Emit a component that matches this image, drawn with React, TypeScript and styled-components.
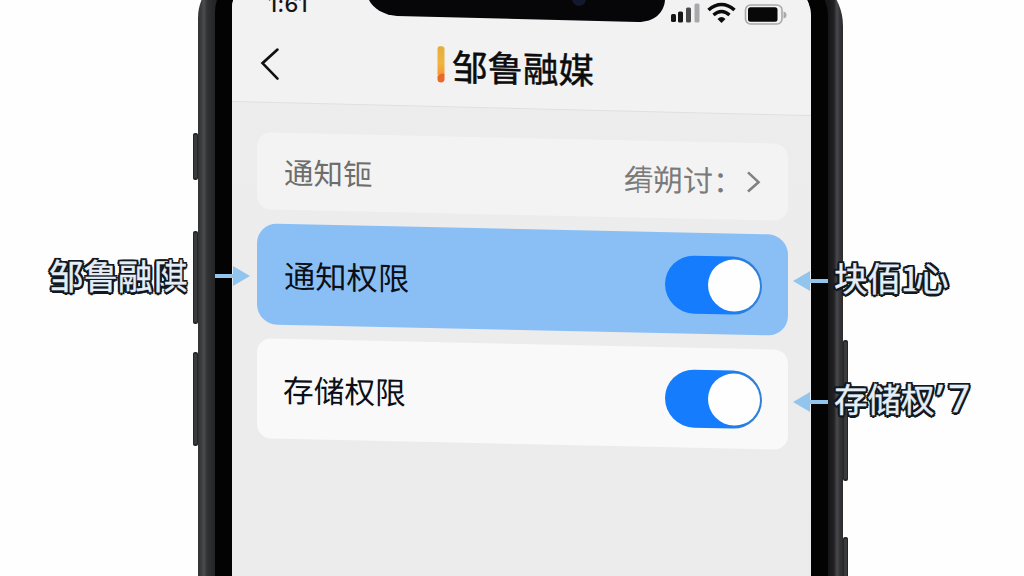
import type { ReactNode } from 'react'
import styled, { createGlobalStyle, css } from 'styled-components'

type Side = 'left' | 'right'
type Tone = 'active' | 'muted' | 'plain'

export default function App() {
  return (
    <Stage>
      <GlobalStyle />
      <Phone>
        <LeftRail>
          <SideKey $height={47} />
          <SideKey $height={93} />
          <SideKey $height={94} />
        </LeftRail>
        <Frame>
          <Bezel>
            <Screen>
              <Notch />
              <StatusBar>
                <Time>1:61</Time>
                <StatusIcons />
              </StatusBar>
              <Header>
                <BackIcon />
                <Title>
                  <BrandMark />
                  邹鲁融媒
                </Title>
              </Header>
              <List>
                <Row $height={77} $tone="muted">
                  <RowLabel $tone="muted">通知钷</RowLabel>
                  <RowValue>
                    <FusedGlyph left="纟" right="青" />
                    <span>朔讨：</span>
                    <ChevronIcon />
                  </RowValue>
                </Row>
                <Row $height={101} $tone="active">
                  <RowLabel $tone="active">通知权限</RowLabel>
                  <Toggle />
                </Row>
                <Row $height={100} $tone="plain">
                  <RowLabel $tone="plain">存储权限</RowLabel>
                  <Toggle />
                </Row>
              </List>
            </Screen>
          </Bezel>
        </Frame>
        <RightRail>
          <SideKey $height={141} />
          <SideKey $height={60} />
        </RightRail>
      </Phone>
      <Callout side="left" x={49} y={276}>
        邹鲁融
        <FusedGlyph left="阝" right="其" />
      </Callout>
      <Callout side="right" x={793} y={281}>
        块佰<Narrow>1</Narrow>心
      </Callout>
      <Callout side="right" x={793} y={402}>
        存储权<Digits>’7</Digits>
      </Callout>
    </Stage>
  )
}

interface CalloutProps {
  children: ReactNode
  side: Side
  x: number
  y: number
}
function Callout({ children, side, x, y }: CalloutProps) {
  return (
    <CalloutBox $side={side} $x={x} $y={y}>
      <CalloutText $side={side}>{children}</CalloutText>
      <Arrow $side={side} />
    </CalloutBox>
  )
}

function FusedGlyph({ left, right }: { left: string; right: string }) {
  return (
    <Fused>
      <span>{left}</span>
      <FusedRight>{right}</FusedRight>
    </Fused>
  )
}

function Notch() {
  return (
    <NotchSvg height="26" viewBox="0 0 304 26" width="304">
      <path d="M0 0H296C295 13 285 22 269 22L28 16C14 15 4 8 0 0Z" fill="#060608" />
      <circle cx="210" cy="-1" fill="#12182e" r="7" />
    </NotchSvg>
  )
}

function StatusIcons() {
  return (
    <svg fill="none" height="26" viewBox="0 0 118 26" width="118">
      <rect fill="#151515" height="8" rx="1.5" width="5" x="1" y="14" />
      <rect fill="#151515" height="11" rx="1.5" width="5" x="8" y="11.5" />
      <rect fill="#4b4b4d" height="15" rx="1.5" width="5" x="16" y="7.5" />
      <rect fill="#a9a9ab" height="19" rx="1.5" width="5" x="24.5" y="3.5" />
      <path d="M38.5 10Q51.5 -1 64.5 10" stroke="#0b0b0b" strokeWidth="3.6" />
      <path d="M43.5 15Q51.5 8 59.5 15" stroke="#0b0b0b" strokeWidth="3.4" />
      <path d="M47.5 19Q51.5 15 55.5 19L51.5 23Z" fill="#0b0b0b" />
      <rect height="19" rx="5" stroke="#a9a9ac" strokeWidth="1.6" width="36.5" x="75.5" y="5" />
      <rect fill="#080808" height="14.5" rx="2.5" width="29.5" x="78" y="7.3" />
      <path d="M113.5 11.5Q116.5 12 116.5 15T113.5 18.5Z" fill="#a9a9ac" />
    </svg>
  )
}

function BackIcon() {
  return (
    <BackSvg fill="none" height="34" viewBox="0 0 20 34" width="20">
      <path d="M17.5 2.5L2.5 16.5L17.5 31.5" stroke="#111" strokeLinecap="round" strokeWidth="2.6" />
    </BackSvg>
  )
}

function BrandMark() {
  return (
    <svg height="38" viewBox="0 0 8 38" width="8">
      <defs>
        <linearGradient id="mark" x1="0" x2="0" y1="0" y2="1">
          <stop offset="0" stopColor="#e3ae3c" />
          <stop offset="0.6" stopColor="#f2b43c" />
          <stop offset="1" stopColor="#f29a35" />
        </linearGradient>
      </defs>
      <path d="M.5 3Q.5 0 4 0T7.5 3V28.5L.5 29Z" fill="url(#mark)" />
      <path d="M.5 30Q4 26 7.5 28V33Q7.5 36.5 4 36.5T.5 33Z" fill="#e8692a" />
    </svg>
  )
}

function ChevronIcon() {
  return (
    <svg fill="none" height="24" viewBox="0 0 15 24" width="15">
      <path d="M2 2.5L12.5 12L2 21.5" stroke="#818183" strokeWidth="2.6" />
    </svg>
  )
}

function Toggle() {
  return (
    <Track>
      <Knob />
    </Track>
  )
}

const GlobalStyle = createGlobalStyle`
  * {
    box-sizing: border-box;
  }

  body {
    background-color: #fefefe;
    font-family: "Noto Sans CJK SC", "Noto Sans", sans-serif;
    margin: 0;
  }

  svg {
    display: block;
    flex-shrink: 0;
  }
`

const Stage = styled.div`
  height: 576px;
  overflow: hidden;
  position: relative;
  width: 1024px;
`

const Phone = styled.div`
  display: flex;
  height: 720px;
  margin: -30px 0 0 193px;
  width: 655px;
`

const LeftRail = styled.div`
  display: flex;
  flex-direction: column;
  padding-top: 163px;
  width: 5px;

  > :nth-child(2) {
    margin-top: 51px;
  }

  > :nth-child(3) {
    margin-top: 28px;
  }
`

const RightRail = styled.div`
  display: flex;
  flex-direction: column;
  gap: 56px;
  padding-top: 370px;
  width: 5px;
`

const SideKey = styled.div<{
  $height: number
}>`
  background-color: #3a3b3d;
  border: solid #242527;
  border-width: 2px 1px;
  border-radius: 2px;
  height: ${p => p.$height}px;
`

const Frame = styled.div`
  background: linear-gradient(
    to right,
    #313234 0,
    #3a3b3d 3px,
    #4a4c4e 6px,
    #303234 9px,
    #252628 16px,
    #1c1c1d 50%,
    #171719 calc(100% - 14px),
    #222224 calc(100% - 9px),
    #4b4a50 calc(100% - 6px),
    #39393c calc(100% - 4px),
    #2b2b2d 100%
  );
  border-radius: 48px 56px 0 0;
  display: flex;
  flex-grow: 1;
  padding: 4px 15px 0 17px;
`

const Bezel = styled.div`
  background-color: #030304;
  border-radius: 38px 42px 0 0;
  display: flex;
  flex-grow: 1;
  padding: 8px 17px 0;
`

const Screen = styled.div`
  background: linear-gradient(#ededee, #ebebec);
  border-radius: 26px 34px 0 0;
  display: flex;
  flex-direction: column;
  flex-grow: 1;
  overflow: hidden;
  padding-top: 18px;
  position: relative;
`

const NotchSvg = styled.svg`
  left: 137px;
  position: absolute;
  top: 18px;
  z-index: 2;
`

const StatusBar = styled.div`
  align-items: flex-start;
  display: flex;
  height: 28px;
  justify-content: space-between;
  padding: 0 23px 0 36px;
  position: relative;
  z-index: 1;
`

const Time = styled.span`
  color: #161616;
  font-family: Inter, sans-serif;
  font-size: 22px;
  font-weight: 500;
  letter-spacing: 0.3px;
  line-height: 24px;
  margin-top: -8px;
`

const Header = styled.div`
  align-items: center;
  background: #f2f2f3;
  border-bottom: 1px solid #dfdfe1;
  box-shadow: 0 -50px 0 #f2f2f3;
  display: flex;
  height: 81px;
  padding: 0 28px;
  transform: skewY(1.4deg);
`

const BackSvg = styled.svg`
  margin-top: 4px;
`

const Title = styled.div`
  align-items: center;
  color: #0c0c0c;
  display: flex;
  font-size: 35.5px;
  gap: 7px;
  line-height: 44px;
  margin: -2px 0 0 157px;
  -webkit-text-stroke: 0.5px #0c0c0c;
`

const List = styled.div`
  display: flex;
  flex-direction: column;
  gap: 14px;
  padding: 29px 23px 0 25px;
`

const Row = styled.div<{
  $height: number
  $tone: Tone
}>`
  align-items: center;
  background-color: ${p => ({ active: '#8abff6', muted: '#f3f3f4', plain: '#f9f9fa' })[p.$tone]};
  border-radius: ${p => (p.$tone === 'active' ? 20 : 14)}px;
  display: flex;
  height: ${p => p.$height}px;
  justify-content: space-between;
  padding: 0 26px 0 27px;
  transform: skewY(1.25deg);

  ${p =>
    p.$tone === 'muted' &&
    css`
    padding-bottom: 1px;
  `}
`

const RowLabel = styled.span<{
  $tone: Tone
}>`
  color: ${p => (p.$tone === 'muted' ? '#6d6d6b' : '#0b0f16')};
  font-size: ${p => ({ active: 31.3, muted: 29.5, plain: 30.7 })[p.$tone]}px;
  line-height: 40px;
  margin-left: ${p => (p.$tone === 'plain' ? -1 : 0)}px;
`

const RowValue = styled.div`
  align-items: center;
  color: #7a7a7a;
  display: flex;
  font-size: 30px;
  line-height: 40px;
  margin-top: -3px;

  > svg {
    margin: 4px 1px 0 3px;
  }
`

const Fused = styled.span`
  display: inline-flex;
  overflow: visible;
  width: 1em;

  > span:first-child {
    width: 0.32em;
  }
`

const FusedRight = styled.span`
  transform: scaleX(0.68);
  transform-origin: 0 50%;
`

const Track = styled.div`
  background: linear-gradient(to right, #147cfd 60%, #2f80d8 90%);
  border-radius: 29px;
  display: flex;
  height: 58px;
  justify-content: flex-end;
  margin-top: 2px;
  padding: 3px 2px;
  width: 97px;
`

const Knob = styled.div`
  background-color: #fefefe;
  border-radius: 50%;
  height: 52px;
  width: 52px;
`

const CalloutBox = styled.div<{
  $side: Side
  $x: number
  $y: number
}>`
  align-items: center;
  display: flex;
  flex-direction: ${p => (p.$side === 'left' ? 'row' : 'row-reverse')};
  height: 44px;
  left: ${p => p.$x}px;
  position: absolute;
  top: ${p => p.$y - 22}px;
`

const CalloutText = styled.span<{
  $side: Side
}>`
  color: #e6eef8;
  font-size: ${p => (p.$side === 'left' ? 34.5 : 33.5)}px;
  line-height: 44px;
  text-shadow:
    2.5px 0 0 #101820,
    -2.5px 0 0 #101820,
    0 2.5px 0 #101820,
    0 -2.5px 0 #101820,
    2px 2px 0 #101820,
    -2px 2px 0 #101820,
    2px -2px 0 #101820,
    -2px -2px 0 #101820;
  white-space: nowrap;
  -webkit-text-stroke: 0.4px #e6eef8;

  ${p =>
    p.$side === 'left'
      ? css`
    margin-top: -5px;
    width: 166px;
  `
      : css`
    margin: -9px 0 0 6px;
  `}
`

const Narrow = styled.span`
  display: inline-block;
  text-align: center;
  width: 14px;
`

const Digits = styled.span`
  font-family: "Noto Sans", sans-serif;
  font-size: 38px;
  letter-spacing: 5px;
  line-height: 1;
  margin-left: 2px;
`

const Arrow = styled.span<{
  $side: Side
}>`
  align-items: center;
  display: flex;
  transform: ${p => (p.$side === 'left' ? 'none' : 'scaleX(-1)')};

  &::before {
    background-color: #92c5ee;
    content: '';
    height: 4px;
    width: 18px;
  }

  &::after {
    border: solid transparent;
    border-left-color: #92c5ee;
    border-width: 10px 0 10px 17px;
    content: '';
  }
`
